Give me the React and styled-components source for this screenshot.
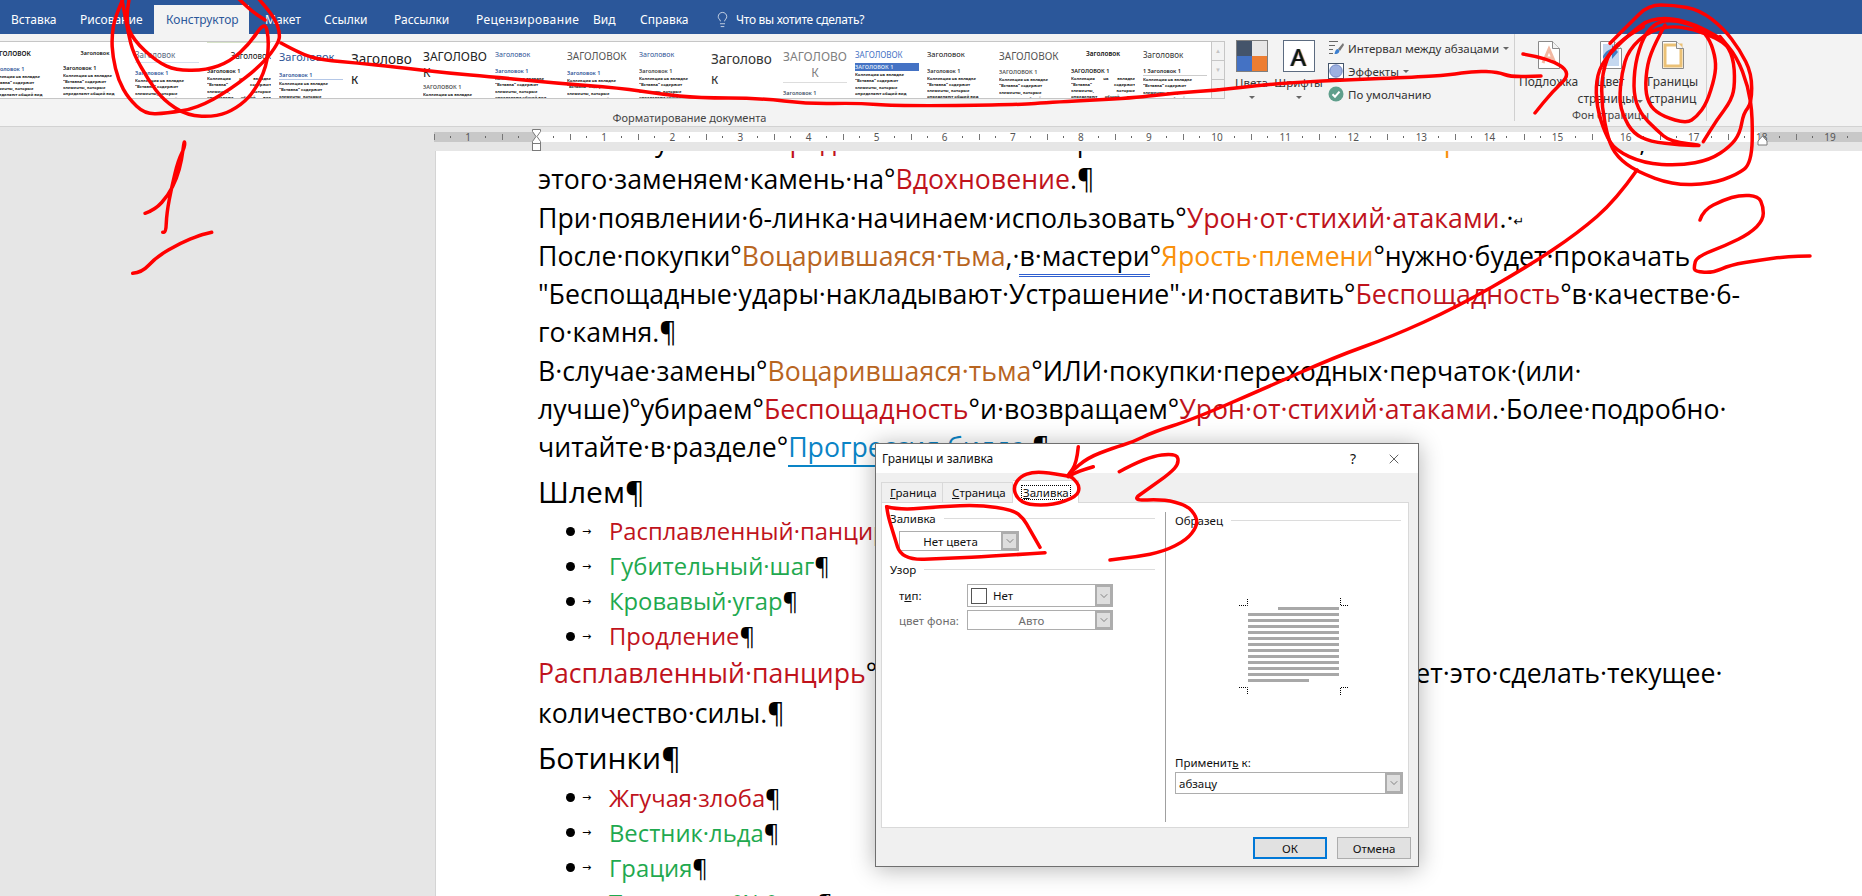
import React from 'react';
import styled, { createGlobalStyle } from 'styled-components';
import { ChevronDown, Lightbulb, X } from 'lucide-react';

const WORD_BLUE = '#2b579a';
const UI_FONT = '"Noto Sans", "Open Sans", sans-serif';
const DOC_FONT = '"Open Sans", "Noto Sans", sans-serif';
const CM = 68.1;

const GlobalStyle = createGlobalStyle`
  html, body { margin: 0; padding: 0; }
  body { font-family: ${UI_FONT}; overflow: hidden; }
  * { box-sizing: border-box; }
`;

const Window = styled.div`
  position: relative;
  width: 1862px;
  height: 896px;
  overflow: hidden;
  display: flex;
  flex-direction: column;
  background: #e6e6e6;
`;

/* ---------- tabs ---------- */
const TabBar = styled.div`
  height: 34px;
  flex: none;
  padding-top: 5px;
  display: flex;
  background: ${WORD_BLUE};
`;

const Tab = styled.div`
  width: ${({ $w }) => ($w ? `${$w}px` : 'auto')};
  flex: none;
  height: 29px;
  padding-left: ${({ $pad }) => $pad}px;
  display: flex;
  align-items: center;
  gap: 5px;
  font-size: 12px;
  letter-spacing: ${({ $track }) => $track || 0}px;
  white-space: nowrap;
  color: ${({ $active }) => ($active ? WORD_BLUE : '#fff')};
  background: ${({ $active }) => ($active ? '#f3f3f3' : 'transparent')};
`;

/* ---------- ribbon ---------- */
const Ribbon = styled.div`
  height: 93px;
  flex: none;
  display: flex;
  background: #f3f3f3;
  border-bottom: 1px solid #d2d2d2;
`;

const GalleryGroup = styled.div`
  width: 1225px;
  flex: none;
  display: flex;
  flex-direction: column;
  align-items: center;
  padding-top: 7px;
`;

const GroupLabel = styled.div`
  margin-left: ${({ $shift }) => $shift || 0}px;
  font-size: 11px;
  line-height: 16px;
  color: #444;
  white-space: nowrap;
`;

const Gallery = styled.div`
  width: 100%;
  height: 58px;
  margin-bottom: 11px;
  display: flex;
  background: #fff;
  border-top: 1px solid #c6c6c6;
  border-bottom: 1px solid #c6c6c6;
  border-right: 1px solid #c6c6c6;
`;

const GalleryTrack = styled.div`
  flex: 1;
  overflow: hidden;
  display: flex;
  gap: 8px;
  padding-left: 0;
`;

const GalleryItem = styled.div`
  width: 64px;
  flex: none;
  height: 56px;
  overflow: hidden;
  padding-top: 7px;
  margin-left: ${({ $first }) => ($first ? '-9px' : '0')};
  border-top: ${({ $topRule }) => ($topRule ? '1px solid #d7e3c8' : 'none')};
`;

const ItemTitle = styled.div`
  font-size: ${({ $size }) => $size}px;
  line-height: ${({ $size }) => ($size > 13 ? 20 : $size + 4)}px;
  color: ${({ $color }) => $color};
  font-weight: ${({ $bold }) => ($bold ? 600 : 400)};
  text-align: ${({ $align }) => $align || 'left'};
  word-break: break-all;
  border-bottom: ${({ $rule }) => ($rule ? `1px solid ${$rule}` : 'none')};
  padding-bottom: ${({ $rule }) => ($rule ? '1px' : '0')};
`;

const ItemHeading = styled.div`
  font-size: 5.5px;
  line-height: 8px;
  margin-top: ${({ $gap }) => $gap}px;
  color: ${({ $color }) => $color};
  font-weight: 600;
  white-space: nowrap;
  background: ${({ $bar }) => $bar || 'transparent'};
  border-bottom: ${({ $rule }) => ($rule ? `1px solid ${$rule}` : 'none')};
`;

const ItemBody = styled.div`
  font-size: 4.2px;
  line-height: 6.3px;
  font-weight: 700;
  color: #222;
  margin-top: 1px;
  text-align: ${({ $justify }) => ($justify ? 'justify' : 'left')};
`;

const ScrollColumn = styled.div`
  width: 13px;
  flex: none;
  display: flex;
  flex-direction: column;
  border-left: 1px solid #c6c6c6;
`;

const ScrollButton = styled.div`
  flex: 1;
  display: flex;
  align-items: center;
  justify-content: center;
  background: #f3f3f3;
  border-bottom: 1px solid #c6c6c6;
  font-size: 6px;
  color: ${({ $on }) => ($on ? '#555' : '#c4c4c4')};
  &:last-child { border-bottom: none; }
`;

const ThemeGroup = styled.div`
  width: 290px;
  flex: none;
  display: flex;
  padding: 6px 0 0 3px;
  border-right: 1px solid #d0d0d0;
  margin-bottom: 5px;
`;

const ThemeButton = styled.div`
  width: 47px;
  flex: none;
  display: flex;
  flex-direction: column;
  align-items: center;
  font-size: 11.5px;
  color: #333;
  line-height: 17px;
`;

const Swatches = styled.div`
  width: 32px;
  height: 32px;
  margin-bottom: 2px;
  display: grid;
  grid-template-columns: 1fr 1fr;
  border: 1px solid #7f7f7f;
`;

const Swatch = styled.span`
  background: ${({ $c }) => $c};
`;

const FontBox = styled.div`
  width: 32px;
  height: 32px;
  margin-bottom: 2px;
  display: flex;
  align-items: center;
  justify-content: center;
  background: #fff;
  border: 1px solid #5c6b80;
  font-size: 24px;
  color: #111;
  text-shadow: 1px 0 0 #f7a13a, -1px 0 0 #2a7de1;
`;

const Caret = styled.span`
  width: 0;
  height: 0;
  display: inline-block;
  margin-top: ${({ $top }) => $top || 0}px;
  border-left: 3px solid transparent;
  border-right: 3px solid transparent;
  border-top: 3px solid #666;
`;

const OptionList = styled.div`
  margin-left: 6px;
  display: flex;
  flex-direction: column;
  gap: 7px;
`;

const OptionRow = styled.div`
  height: 16px;
  display: flex;
  align-items: center;
  gap: 4px;
  font-size: 11.5px;
  color: #333;
  white-space: nowrap;
`;

const PageGroup = styled.div`
  width: 192px;
  flex: none;
  display: flex;
  flex-direction: column;
  align-items: center;
  padding-top: 7px;
  border-right: 1px solid #d0d0d0;
  margin-bottom: 5px;
`;

const PageButtons = styled.div`
  height: 70px;
  width: 100%;
  display: flex;
  justify-content: center;
`;

const PageButton = styled.div`
  width: 62px;
  display: flex;
  flex-direction: column;
  align-items: center;
  font-size: 12px;
  line-height: 17px;
  color: #333;
  white-space: nowrap;
`;

const PageIcon = styled.svg`
  flex: none;
  margin-bottom: 4px;
`;

/* ---------- ruler ---------- */
const RulerBar = styled.div`
  height: 24px;
  flex: none;
  padding: 5px 0 0 434px;
  position: relative;
`;

const Ruler = styled.div`
  height: 10px;
  display: flex;
  overflow: hidden;
  background: linear-gradient(
    to right,
    #c8c8c8 102px,
    #fff 102px,
    #fff 1326px,
    #c8c8c8 1326px
  );
`;

const RulerCell = styled.div`
  width: ${CM}px;
  flex: none;
  display: grid;
  grid-template-columns: 25% 50% 25%;
  align-items: center;
  background: linear-gradient(#777, #777) left center / 1px 6px no-repeat;
`;

const RulerDot = styled.span`
  width: 1px;
  height: 2px;
  background: #666;
  justify-self: ${({ $side }) => $side};
`;

const RulerNumber = styled.span`
  font-size: 10px;
  line-height: 10px;
  color: #555;
  text-align: center;
`;

const RulerMark = styled.svg`
  position: absolute;
  left: ${({ $x }) => $x}px;
  top: ${({ $y }) => $y}px;
`;

/* ---------- document ---------- */
const Workspace = styled.div`
  flex: 1;
  min-height: 0;
  display: flex;
  padding-left: 435px;
`;

const Page = styled.div`
  flex: 1;
  overflow: hidden;
  padding-left: 102px;
  background: #fff;
  border-left: 1px solid #d4d4d4;
  font-family: ${DOC_FONT};
  color: #000;
  white-space: nowrap;
`;

const Line = styled.div`
  font-size: 26.67px;
  line-height: 38.3px;
  margin-top: ${({ $top }) => $top || 0}px;
`;

const Heading = styled.div`
  font-size: 30px;
  line-height: 45px;
  margin-top: ${({ $top }) => $top || 0}px;
`;

const BulletList = styled.div`
  display: flex;
  flex-direction: column;
`;

const Bullet = styled.div`
  height: 35px;
  display: flex;
  align-items: center;
  font-size: 23.8px;
  color: ${({ $c }) => $c};
`;

const BulletDot = styled.span`
  width: 9px;
  height: 9px;
  margin-left: 28px;
  border-radius: 50%;
  background: #000;
`;

const TabArrow = styled.span`
  width: 34px;
  padding-left: 7px;
  font-family: "DejaVu Sans", sans-serif;
  font-size: 11px;
  color: #000;
`;

const Tone = styled.span`
  color: ${({ $c }) => $c};
`;

const Pilcrow = styled.span`
  color: #000;
`;

const BreakMark = styled.span`
  font-family: "DejaVu Sans", sans-serif;
  font-size: 13px;
  line-height: 0;
  vertical-align: 2px;
`;

const Flagged = styled.span`
  border-bottom: 3px double #2f5fd0;
`;

const Link = styled.span`
  color: #0a84c6;
  border-bottom: 2px solid #0a84c6;
`;

/* ---------- dialog ---------- */
const Dialog = styled.div`
  position: absolute;
  left: 875px;
  top: 443px;
  width: 544px;
  height: 424px;
  display: flex;
  flex-direction: column;
  background: #f0f0f0;
  border: 1px solid #6f6f6f;
  box-shadow: 0 2px 22px rgba(0, 0, 0, 0.3);
  font-size: 11.5px;
  color: #111;
`;

const DialogTitle = styled.div`
  height: 29px;
  flex: none;
  padding: 0 16px 0 6px;
  display: flex;
  align-items: center;
  background: #fff;
  font-size: 12px;
`;

const Help = styled.span`
  margin-left: auto;
  margin-right: 30px;
  font-size: 14px;
`;

const DialogTabs = styled.div`
  height: 29px;
  flex: none;
  margin-left: 5px;
  padding-top: 9px;
  display: flex;
  align-items: flex-end;
`;

const DialogTab = styled.div`
  width: ${({ $w }) => $w}px;
  height: ${({ $active }) => ($active ? 23 : 20)}px;
  padding-left: ${({ $pad }) => $pad}px;
  display: flex;
  align-items: center;
  background: ${({ $active }) => ($active ? '#fff' : '#f0f0f0')};
  border: 1px solid #d9d9d9;
  border-left: ${({ $first }) => ($first ? '1px solid #d9d9d9' : 'none')};
  border-bottom: none;
  margin-bottom: ${({ $active }) => ($active ? '-1px' : '0')};
  position: relative;
`;

const FocusBox = styled.span`
  padding: 0 1px;
  outline: 1px dotted #000;
  line-height: 13px;
`;

const Panel = styled.div`
  height: 326px;
  flex: none;
  margin: 0 9px 0 5px;
  display: flex;
  background: #fff;
  border: 1px solid #d9d9d9;
`;

const LeftCol = styled.div`
  width: 283px;
  flex: none;
  padding: 7px 10px 0 8px;
`;

const RightCol = styled.div`
  flex: 1;
  height: 310px;
  margin-top: 9px;
  display: flex;
  flex-direction: column;
  border-left: 1px solid #a0a0a0;
  padding-bottom: 28px;
`;

const Legend = styled.div`
  height: 16px;
  margin-top: ${({ $top }) => $top || 0}px;
  margin-right: ${({ $right }) => $right || 0}px;
  margin-left: ${({ $left }) => $left || 0}px;
  display: flex;
  align-items: center;
  gap: 8px;
  &::after {
    content: '';
    flex: 1;
    height: 1px;
    background: #dcdcdc;
  }
`;

const Combo = styled.div`
  width: ${({ $w }) => $w}px;
  height: ${({ $h }) => $h}px;
  margin-left: ${({ $left }) => $left || 0}px;
  margin-top: ${({ $top }) => $top || 0}px;
  display: flex;
  background: #fff;
  border: 1px solid #adadad;
  color: ${({ $muted }) => ($muted ? '#6d6d6d' : '#111')};
`;

const ComboValue = styled.div`
  flex: 1;
  min-width: 0;
  display: flex;
  align-items: center;
  gap: 6px;
  padding: 0 3px;
  justify-content: ${({ $center }) => ($center ? 'center' : 'flex-start')};
`;

const ComboArrow = styled.div`
  width: 17px;
  flex: none;
  display: flex;
  align-items: center;
  justify-content: center;
  background: #dedede;
  color: #444;
  box-shadow: inset 0 0 0 2px #adadad;
`;

const Field = styled.div`
  display: flex;
  align-items: center;
  margin-top: ${({ $top }) => $top}px;
  padding-left: 9px;
`;

const FieldLabel = styled.span`
  width: 68px;
  flex: none;
  color: ${({ $muted }) => ($muted ? '#6d6d6d' : '#111')};
`;

const EmptySwatch = styled.span`
  width: 16px;
  height: 16px;
  border: 1px solid #555;
  background: #fff;
`;

const Preview = styled.svg`
  display: block;
  margin: 70px 0 0 73px;
`;

const ApplyLabel = styled.div`
  margin: auto 0 2px 9px;
  line-height: 14px;
`;

const Footer = styled.div`
  flex: 1;
  display: flex;
  justify-content: flex-end;
  gap: 10px;
  padding: 9px 7px 0 0;
`;

const DialogButton = styled.div`
  width: 74px;
  height: 22px;
  display: flex;
  align-items: center;
  justify-content: center;
  background: #e1e1e1;
  border: ${({ $primary }) => ($primary ? '2px solid #0078d7' : '1px solid #adadad')};
`;

const Scribbles = styled.svg`
  position: absolute;
  left: 0;
  top: 0;
  pointer-events: none;
`;

const LOREM =
  'Коллекция на вкладке "Вставка" содержит элементы, которые определяют общий вид документа. Эти коллекции служат для вставки в документ таблиц, колонтитулов, списков, титульных страниц и других блоков.';

const STYLES = [
  { title: 'ЗАГОЛОВОК', size: 6.5, color: '#111', bold: true, head: 'Заголовок 1', headColor: '#2f5597', gap: 5 },
  { title: 'Заголовок', size: 5.5, color: '#111', bold: true, align: 'center', head: 'Заголовок 1', headColor: '#111', gap: 5 },
  { title: 'Заголовок', size: 8, color: '#5b6b82', rule: '#d5e0ee', head: 'Заголовок 1', headColor: '#2f5597', gap: 6 },
  { title: 'Заголовок', size: 8, color: '#111', align: 'right', head: 'Заголовок 1', headColor: '#111', gap: 5, topRule: true, justify: true },
  { title: 'Заголовок', size: 11, color: '#2f5597', head: 'Заголовок 1', headColor: '#2f5597', gap: 7, headRule: '#b4c7e7' },
  { title: 'Заголовок', size: 13.5, color: '#222', head: 'Заголовок 1', headColor: '#333', gap: 7 },
  { title: 'ЗАГОЛОВОК', size: 12, color: '#222', head: 'ЗАГОЛОВОК 1', headColor: '#555', gap: 2 },
  { title: 'Заголовок', size: 7, color: '#2f5597', head: 'Заголовок 1', headColor: '#2f5597', gap: 7 },
  { title: 'ЗАГОЛОВОК', size: 10, color: '#555', head: 'Заголовок 1', headColor: '#2f5597', gap: 6 },
  { title: 'Заголовок', size: 7, color: '#2f5597', head: 'Заголовок 1', headColor: '#444', gap: 7 },
  { title: 'Заголовок', size: 13.5, color: '#333', head: 'Заголовок 1', headColor: '#888', gap: 7 },
  { title: 'ЗАГОЛОВОК', size: 12, color: '#7f7f7f', align: 'center', rule: '#ddd', head: 'Заголовок 1', headColor: '#44546a', gap: 6 },
  { title: 'ЗАГОЛОВОК', size: 8, color: '#4472c4', head: 'ЗАГОЛОВОК 1', headColor: '#dfe7f7', bar: '#4472c4', gap: 2 },
  { title: 'Заголовок', size: 7.5, color: '#111', head: 'Заголовок 1', headColor: '#333', gap: 6 },
  { title: 'ЗАГОЛОВОК', size: 10, color: '#555', head: 'ЗАГОЛОВОК 1', headColor: '#555', gap: 5 },
  { title: 'Заголовок', size: 6.5, color: '#111', bold: true, align: 'center', head: 'ЗАГОЛОВОК 1', headColor: '#111', gap: 7, justify: true },
  { title: 'Заголовок', size: 8, color: '#333', head: '1   Заголовок 1', headColor: '#222', gap: 6, headRule: '#ccc' },
];

const RED = '#c0131c';
const GREEN = '#1fa94f';
const BROWN = '#b8651f';
const ORANGE = '#f9900b';

const RULER_CELLS = Array.from({ length: 22 }, (_, i) => i - 1);

// smooth hand drawn stroke through the points, given in 3x crop coordinates
const stroke = (ox, oy, sx, sy, pts) => {
  const p = pts.map(([x, y]) => [ox + x / sx, oy + y / sy]);
  let d = `M${p[0][0].toFixed(1)} ${p[0][1].toFixed(1)}`;
  for (let i = 1; i < p.length - 1; i++) {
    const mx = (p[i][0] + p[i + 1][0]) / 2;
    const my = (p[i][1] + p[i + 1][1]) / 2;
    d += `Q${p[i][0].toFixed(1)} ${p[i][1].toFixed(1)} ${mx.toFixed(1)} ${my.toFixed(1)}`;
  }
  const last = p[p.length - 1];
  return `${d}L${last[0].toFixed(1)} ${last[1].toFixed(1)}`;
};

const STROKES = [
  // circles round the Конструктор tab
  stroke(90, 0, 3, 3, [[100, -5], [75, 50], [65, 110], [68, 170], [85, 240], [115, 295], [165, 343], [230, 340], [320, 325], [420, 270], [520, 190], [565, 130], [570, 100], [555, 55], [505, -5]]),
  stroke(90, 0, 3, 3, [[118, -5], [105, 60], [130, 120], [200, 185], [260, 212], [350, 210], [420, 185], [480, 130], [525, 62], [537, 120], [530, 200], [490, 280], [440, 325], [380, 350], [290, 347], [220, 300], [175, 240], [130, 160], [115, 100], [95, -5]]),
  stroke(90, 0, 3, 3, [[445, -5], [480, 30], [525, 60]]),
  // long line to the page group
  stroke(0, 0, 1, 1, [[281, 43], [303, 55], [323, 60], [357, 63], [395, 67], [447, 73], [494, 77], [554, 83], [620, 88], [660, 94], [699, 98], [758, 98], [810, 104], [857, 103], [897, 106], [1015, 105], [1055, 102], [1134, 98], [1174, 93], [1220, 90], [1261, 85], [1302, 82], [1343, 80], [1417, 77], [1449, 75], [1474, 71], [1498, 72], [1511, 77], [1541, 76]]),
  stroke(0, 0, 1, 1, [[1523, 54], [1548, 58], [1572, 73], [1552, 92], [1535, 113]]),
  // digit 1
  stroke(90, 0, 3, 3, [[165, 640], [195, 630], [235, 585], [260, 535], [275, 480], [283, 418], [285, 440], [265, 480], [245, 560], [230, 640], [228, 697], [218, 697]]),
  stroke(90, 0, 3, 3, [[128, 820], [155, 818], [200, 770], [270, 730], [330, 705], [365, 697]]),
  // circles round Границы страниц
  stroke(1560, 0, 3, 3, [[315, 75], [285, 130], [262, 190], [255, 270], [270, 320], [310, 350], [380, 370], [410, 350], [440, 310], [465, 230], [468, 180], [450, 120], [420, 85], [350, 60], [290, 65], [250, 110], [225, 190], [220, 280], [240, 340], [290, 390], [330, 425], [440, 438], [360, 435], [270, 425], [220, 400], [190, 350], [178, 300], [185, 220], [205, 150], [270, 90], [360, 75], [490, 120], [520, 170], [525, 250], [515, 300], [470, 360], [430, 425]]),
  stroke(1560, 0, 3, 3, [[480, 115], [400, 65], [280, 50], [210, 100], [130, 180], [108, 240], [110, 320], [135, 400], [165, 450], [250, 490], [360, 497], [450, 480], [510, 440], [540, 400], [550, 340], [575, 310], [575, 220], [540, 150], [490, 85], [420, 30], [340, 15], [265, 15], [210, 70], [150, 130]]),
  stroke(1560, 0, 3, 3, [[250, 80], [160, 130], [125, 220], [125, 320], [145, 420], [170, 470], [230, 515], [340, 555], [450, 552], [530, 525], [575, 490], [578, 350], [565, 260], [530, 170], [480, 110]]),
  // digit 2
  stroke(1560, 0, 3, 3, [[420, 660], [430, 630], [490, 600], [540, 585], [595, 588], [610, 620], [610, 660], [570, 700], [500, 735], [410, 770], [402, 800], [405, 815], [460, 818], [510, 795], [600, 780], [680, 770], [750, 768]]),
  // arrow to the dialog tab
  stroke(0, 0, 1, 1, [[1637, 170], [1616, 200], [1578, 233], [1527, 267], [1457, 307], [1391, 337], [1335, 357], [1261, 390], [1191, 420], [1153, 432], [1133, 442], [1113, 448], [1087, 458], [1070, 473]]),
  stroke(880, 430, 3, 3, [[595, 50], [590, 100], [565, 135]]),
  stroke(880, 430, 3, 3, [[640, 110], [590, 125], [565, 140]]),
  // ring on the Заливка tab
  stroke(880, 430, 3, 3, [[575, 140], [520, 130], [460, 125], [420, 140], [400, 170], [410, 205], [445, 225], [520, 225], [590, 200], [600, 170], [580, 145], [570, 140]]),
  // box round the Заливка combo
  stroke(880, 430, 3, 3, [[20, 230], [60, 240], [180, 230], [300, 225], [400, 240], [430, 265], [450, 300], [480, 352]]),
  stroke(880, 430, 3, 3, [[495, 368], [350, 378], [200, 385], [65, 390], [40, 310], [25, 260], [20, 230]]),
  // digit 3
  stroke(880, 430, 3, 3, [[718, 125], [800, 80], [890, 70], [897, 100], [870, 130], [800, 180], [755, 212], [850, 208], [920, 225], [950, 260], [950, 290], [920, 330], [850, 365], [770, 380], [690, 390]]),
];

const PREVIEW_ROWS = Array.from({ length: 13 }, (_, i) => i);

const SpacingIcon = () => (
  <svg width="16" height="16" viewBox="0 0 16 16">
    <path d="M1 1.5h9M1 5.5h6M1 9.5h4M1 13.5h4" stroke="#666" strokeWidth="1" />
    <path d="M15 3l-5 6 2 2 4-6z" fill="#777" />
    <path d="M10 9c-2 0-3 2-3.500 5 2.500 0 4.500-.5 5-3z" fill="#3b7fd0" />
  </svg>
);

const EffectsIcon = () => (
  <svg width="16" height="16" viewBox="0 0 16 16">
    <rect x=".5" y=".5" width="15" height="15" fill="#fff" stroke="#44546a" />
    <circle cx="8" cy="8" r="6.200" fill="#9db0e0" stroke="#7188c4" />
  </svg>
);

const DefaultIcon = () => (
  <svg width="16" height="16" viewBox="0 0 16 16">
    <circle cx="8" cy="8" r="7.500" fill="#5f9f8c" />
    <path d="M4.500 8.200l2.500 2.500 4.500-5" fill="none" stroke="#fff" strokeWidth="2" />
  </svg>
);

const Sheet = ({ children }) => (
  <PageIcon width="22" height="28" viewBox="0 0 22 28">
    <path d="M.5.5h14l7 7v20H.5z" fill="#fff" stroke="#8a8a8a" />
    {children}
    <path d="M14.500.5v7h7" fill="#f3f3f3" stroke="#8a8a8a" />
  </PageIcon>
);

const App = () => (
  <Window>
    <GlobalStyle />
    <TabBar>
      <Tab $w={68} $pad={11}>Вставка</Tab>
      <Tab $w={86} $pad={12}>Рисование</Tab>
      <Tab $w={95} $pad={12} $active>Конструктор</Tab>
      <Tab $w={59} $pad={16}>Макет</Tab>
      <Tab $w={70} $pad={16}>Ссылки</Tab>
      <Tab $w={82} $pad={16}>Рассылки</Tab>
      <Tab $w={117} $pad={16} $track={0.4}>Рецензирование</Tab>
      <Tab $w={47} $pad={16}>Вид</Tab>
      <Tab $w={78} $pad={16}>Справка</Tab>
      <Tab $pad={12} $track={-0.3}>
        <Lightbulb size={17} strokeWidth={1} />
        Что вы хотите сделать?
      </Tab>
    </TabBar>

    <Ribbon>
      <GalleryGroup>
        <Gallery>
          <GalleryTrack>
            {STYLES.map((s, i) => (
              <GalleryItem key={i} $first={i === 0} $topRule={s.topRule}>
                <ItemTitle $size={s.size} $color={s.color} $bold={s.bold} $align={s.align} $rule={s.rule}>
                  {s.title}
                </ItemTitle>
                <ItemHeading $gap={s.gap} $color={s.headColor} $bar={s.bar} $rule={s.headRule}>
                  {s.head}
                </ItemHeading>
                <ItemBody $justify={s.justify}>{LOREM}</ItemBody>
              </GalleryItem>
            ))}
          </GalleryTrack>
          <ScrollColumn>
            <ScrollButton>▲</ScrollButton>
            <ScrollButton>▼</ScrollButton>
            <ScrollButton $on>▾</ScrollButton>
          </ScrollColumn>
        </Gallery>
        <GroupLabel $shift={154}>Форматирование документа</GroupLabel>
      </GalleryGroup>

      <ThemeGroup>
        <ThemeButton>
          <Swatches>
            <Swatch $c="#44546a" />
            <Swatch $c="#e7e6e6" />
            <Swatch $c="#4472c4" />
            <Swatch $c="#ed7d31" />
          </Swatches>
          Цвета
          <Caret $top={5} />
        </ThemeButton>
        <ThemeButton>
          <FontBox>A</FontBox>
          Шрифты
          <Caret $top={5} />
        </ThemeButton>
        <OptionList>
          <OptionRow>
            <SpacingIcon />
            Интервал между абзацами
            <Caret />
          </OptionRow>
          <OptionRow>
            <EffectsIcon />
            Эффекты
            <Caret />
          </OptionRow>
          <OptionRow>
            <DefaultIcon />
            По умолчанию
          </OptionRow>
        </OptionList>
      </ThemeGroup>

      <PageGroup>
        <PageButtons>
          <PageButton>
            <Sheet>
              <path d="M5 22L11 8l6 14M7.500 17h7" fill="none" stroke="#f2b8a2" strokeWidth="3" />
            </Sheet>
            Подложка
          </PageButton>
          <PageButton>
            <Sheet>
              <rect x="3" y="3" width="16" height="22" fill="#c5d8ef" />
              <path d="M3 15c3-5 6-7 9-7V4l6 7-6 7v-4c-3 0-6 1-9 4z" fill="#3f7fc4" />
            </Sheet>
            Цвет
            <span>
              страницы <Caret />
            </span>
          </PageButton>
          <PageButton>
            <Sheet>
              <rect x="3" y="4" width="16" height="21" fill="none" stroke="#ebc176" strokeWidth="3" />
            </Sheet>
            Границы
            <span>страниц</span>
          </PageButton>
        </PageButtons>
        <GroupLabel>Фон страницы</GroupLabel>
      </PageGroup>
    </Ribbon>

    <RulerBar>
      <Ruler>
        {RULER_CELLS.map((n) => (
          <RulerCell key={n}>
            <RulerDot $side="end" />
            <RulerNumber>{n === 0 ? '' : Math.abs(n)}</RulerNumber>
            <RulerDot $side="start" />
          </RulerCell>
        ))}
      </Ruler>
      <RulerMark $x={531} $y={2} width="11" height="22" viewBox="0 0 11 22">
        <path d="M.5.500h8v2L5 7.500l3.500 5v2h-8v-2l3.500-5-3.500-5z" fill="#fff" stroke="#7a7a7a" transform="translate(1)" />
        <rect x="1.500" y="14.500" width="8" height="7" fill="#fff" stroke="#7a7a7a" />
      </RulerMark>
      <RulerMark $x={1757} $y={8} width="11" height="11" viewBox="0 0 11 11">
        <path d="M5.500 1L10 6v4H1V6z" fill="#fff" stroke="#7a7a7a" />
      </RulerMark>
    </RulerBar>

    <Workspace>
      <Page>
        <Line $top={-29}>
          Вначале·у·нас·на°<Tone $c={RED}>Предвестник</Tone>·камень·серая·не·нашли·этот·камень·<Tone $c={ORANGE}>Ярость·племени</Tone>,
        </Line>
        <Line>
          этого·заменяем·камень·на°<Tone $c={RED}>Вдохновение</Tone>.¶
        </Line>
        <Line>
          При·появлении·6-линка·начинаем·использовать°<Tone $c={RED}>Урон·от·стихий·атаками</Tone>.·<BreakMark>↵</BreakMark>
        </Line>
        <Line>
          После·покупки°<Tone $c={BROWN}>Воцарившаяся·тьма</Tone>,·<Flagged>в·мастери</Flagged>°<Tone $c={ORANGE}>Ярость·племени</Tone>°нужно·будет·прокачать
        </Line>
        <Line>
          "Беспощадные·удары·накладывают·Устрашение"·и·поставить°<Tone $c={RED}>Беспощадность</Tone>°в·качестве·6-
        </Line>
        <Line>го·камня.¶</Line>
        <Line>
          В·случае·замены°<Tone $c={BROWN}>Воцарившаяся·тьма</Tone>°ИЛИ·покупки·переходных·перчаток·(или·
        </Line>
        <Line>
          лучше)°убираем°<Tone $c={RED}>Беспощадность</Tone>°и·возвращаем°<Tone $c={RED}>Урон·от·стихий·атаками</Tone>.·Более·подробно·
        </Line>
        <Line>
          читайте·в·разделе°<Link>Прогрессия·билда</Link>.¶
        </Line>

        <Heading $top={2}>Шлем¶</Heading>
        <BulletList>
          {[
            ['Расплавленный·панцирь', RED],
            ['Губительный·шаг', GREEN],
            ['Кровавый·угар', GREEN],
            ['Продление', RED],
          ].map(([text, c]) => (
            <Bullet key={text} $c={c}>
              <BulletDot />
              <TabArrow>→</TabArrow>
              {text}
              <Pilcrow>¶</Pilcrow>
            </Bullet>
          ))}
        </BulletList>

        <Line>
          <Tone $c={RED}>Расплавленный·панцирь</Tone>°используем·только·если·нам·это·позволяет·это·сделать·текущее·
        </Line>
        <Line $top={2}>количество·силы.¶</Line>

        <Heading $top={3}>Ботинки¶</Heading>
        <BulletList>
          {[
            ['Жгучая·злоба', RED],
            ['Вестник·льда', GREEN],
            ['Грация', GREEN],
            ['Темп·игры°№°два', GREEN],
          ].map(([text, c]) => (
            <Bullet key={text} $c={c}>
              <BulletDot />
              <TabArrow>→</TabArrow>
              {text}
              <Pilcrow>¶</Pilcrow>
            </Bullet>
          ))}
        </BulletList>
      </Page>
    </Workspace>

    <Dialog>
      <DialogTitle>
        Границы и заливка
        <Help>?</Help>
        <X size={16} strokeWidth={1} />
      </DialogTitle>
      <DialogTabs>
        <DialogTab $w={62} $pad={8} $first>
          <span>
            <u>Г</u>раница
          </span>
        </DialogTab>
        <DialogTab $w={70} $pad={9}>
          <span>
            <u>С</u>траница
          </span>
        </DialogTab>
        <DialogTab $w={66} $pad={9} $active>
          <FocusBox>
            <u>З</u>аливка
          </FocusBox>
        </DialogTab>
      </DialogTabs>
      <Panel>
        <LeftCol>
          <Legend>Заливка</Legend>
          <Combo $w={120} $h={20} $left={9} $top={5}>
            <ComboValue $center>Нет цвета</ComboValue>
            <ComboArrow>
              <ChevronDown size={12} strokeWidth={1.2} />
            </ComboArrow>
          </Combo>
          <Legend $top={10}>Узор</Legend>
          <Field $top={7}>
            <FieldLabel>
              т<u>и</u>п:
            </FieldLabel>
            <Combo $w={146} $h={23}>
              <ComboValue>
                <EmptySwatch />
                Нет
              </ComboValue>
              <ComboArrow>
                <ChevronDown size={12} strokeWidth={1.2} />
              </ComboArrow>
            </Combo>
          </Field>
          <Field $top={3}>
            <FieldLabel $muted>цвет фона:</FieldLabel>
            <Combo $w={146} $h={20} $muted>
              <ComboValue $center>Авто</ComboValue>
              <ComboArrow>
                <ChevronDown size={12} strokeWidth={1.2} />
              </ComboArrow>
            </Combo>
          </Field>
        </LeftCol>
        <RightCol>
          <Legend $left={9} $right={7}>Образец</Legend>
          <Preview width="109" height="97" viewBox="0 0 109 97">
            <path
              d="M0 7.500h8.500V0M101.500 0v7.500H109M0 89.500h8.500V97M101.500 97v-7.500H109"
              fill="none"
              stroke="#000"
              strokeDasharray="1 1"
            />
            {PREVIEW_ROWS.map((i) => (
              <rect
                key={i}
                x={i === 0 ? 39 : 9}
                y={9 + i * 6}
                width={i === 0 ? 61 : i === 12 ? 61 : 91}
                height="3"
                fill="#a8a8a8"
              />
            ))}
          </Preview>
          <ApplyLabel>
            Применит<u>ь</u> к:
          </ApplyLabel>
          <Combo $w={228} $h={22} $left={9}>
            <ComboValue>абзацу</ComboValue>
            <ComboArrow>
              <ChevronDown size={12} strokeWidth={1.2} />
            </ComboArrow>
          </Combo>
        </RightCol>
      </Panel>
      <Footer>
        <DialogButton $primary>ОК</DialogButton>
        <DialogButton>Отмена</DialogButton>
      </Footer>
    </Dialog>

    <Scribbles width="1862" height="896" viewBox="0 0 1862 896">
      {STROKES.map((d, i) => (
        <path
          key={i}
          d={d}
          fill="none"
          stroke="#ff0000"
          strokeWidth="3.500"
          strokeLinecap="round"
          strokeLinejoin="round"
        />
      ))}
    </Scribbles>
  </Window>
);

export default App;
